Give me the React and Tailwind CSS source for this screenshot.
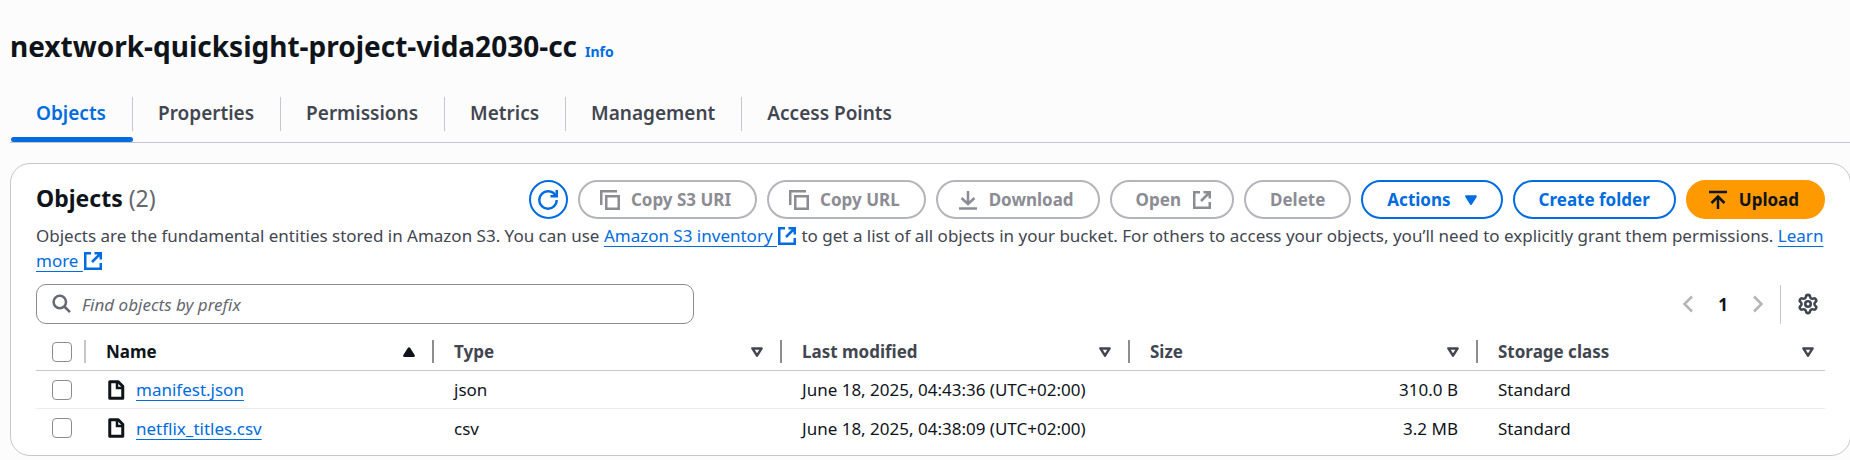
import { Settings } from "lucide-react";

const TABS = ["Objects", "Properties", "Permissions", "Metrics", "Management", "Access Points"];

const COLUMNS = [
  { label: "Name", sorted: true },
  { label: "Type" },
  { label: "Last modified" },
  { label: "Size" },
  { label: "Storage class" },
];

const FILES = [
  { name: "manifest.json", type: "json", modified: "June 18, 2025, 04:43:36 (UTC+02:00)", size: "310.0 B", storage: "Standard" },
  { name: "netflix_titles.csv", type: "csv", modified: "June 18, 2025, 04:38:09 (UTC+02:00)", size: "3.2 MB", storage: "Standard" },
];

function Icon({ children, className = "size-5", strokeWidth = 2.5 }) {
  return (
    <svg viewBox="0 0 20 20" fill="none" stroke="currentColor" strokeWidth={strokeWidth} aria-hidden="true" className={`shrink-0 ${className}`}>
      {children}
    </svg>
  );
}

function RefreshIcon() {
  return (
    <Icon>
      <path d="M12.5 6.25h6.25V0" />
      <path d="M18.75 10A8.7 8.7 0 0 1 10 18.75 8.7 8.7 0 0 1 1.25 10 8.7 8.7 0 0 1 10 1.25a8.6 8.6 0 0 1 7.9 5" />
    </Icon>
  );
}

function CopyIcon() {
  return (
    <Icon>
      <path d="M1.25 15V1.25H17" />
      <path d="M6.25 6.25h12.5v12.5H6.25z" />
    </Icon>
  );
}

function DownloadIcon() {
  return (
    <Icon>
      <path d="M10 1v12.5M3.5 8l6.5 6 6.5-6M1 18.5h18" />
    </Icon>
  );
}

function UploadIcon() {
  return (
    <Icon>
      <path d="M10 19V7M3.5 13l6.5-6.5 6.5 6.5M1 2h18" />
    </Icon>
  );
}

function ExternalIcon({ className }) {
  return (
    <Icon className={className}>
      <path d="M11.5 2.25h6.25V8.5M9 11l8.5-8.5" />
      <path d="M17.75 12v5.75H2.25V2.25H8" />
    </Icon>
  );
}

function FileIcon() {
  return (
    <Icon strokeWidth={3}>
      <path strokeLinejoin="round" d="M3.75 1.75h8.5l4.5 4.5v12h-13z" />
      <path strokeWidth="2.5" d="M11 2v6h5.5" />
    </Icon>
  );
}

function Triangle({ up, filled }) {
  return (
    <svg viewBox="0 0 12 10" aria-hidden="true" className="h-[10px] w-3 shrink-0" fill={filled ? "currentColor" : "none"} stroke="currentColor" strokeWidth="2.5" strokeLinejoin="round">
      <path d={up ? "M6 1.5l4.6 7.200H1.400z" : "M6 8.600L1.400 1.400h9.200z"} />
    </svg>
  );
}

function Button({ children, variant = "normal", disabled }) {
  const look = {
    normal: "border-[#006ce0] text-[#006ce0] bg-white",
    disabled: "border-[#b4b4bb] text-[#8c8c94] bg-white",
    primary: "border-[#ff9900] text-[#0f141a] bg-[#ff9900]",
  }[disabled ? "disabled" : variant];
  return (
    <button
      type="button"
      disabled={disabled}
      className={`flex h-[39px] shrink-0 items-center rounded-full border-2 text-[17px] font-bold whitespace-nowrap ${look}`}
    >
      {children}
    </button>
  );
}

function Checkbox({ label }) {
  return (
    <input type="checkbox" aria-label={label} className="block size-5 appearance-none rounded-[4px] border border-[#8c8c94] bg-white checked:bg-[#006ce0]" />
  );
}

const LINK = "text-[#006ce0] underline decoration-1 underline-offset-4";

export default function App() {
  return (
    <main className="min-h-screen overflow-hidden bg-[#fcfcfd] pt-[26px] pb-1 pl-[10px] font-['Noto_Sans',sans-serif] text-[17px] leading-[25px] text-[#0f141a]">
      <header className="flex items-baseline gap-2">
        <h1 className="text-[28px] leading-[40px] font-bold">nextwork-quicksight-project-vida2030-cc</h1>
        <a href="#info" className="text-[14px] font-bold text-[#006ce0]">Info</a>
      </header>

      <nav className="mt-[21px] flex h-[56px] items-start border-b border-[#c6c6cd] pl-px">
        {TABS.map((tab, i) => (
          <a
            key={tab}
            href={`#${tab.toLowerCase().replace(" ", "-")}`}
            className={`flex h-[55px] flex-col text-[19px] font-semibold ${i === 0 ? "text-[#006ce0]" : "text-[#424650]"}`}
          >
            <span className={`mt-[10px] flex h-[34px] items-center pr-[26px] pb-[2px] pl-[25px] ${i < TABS.length - 1 ? "border-r border-[#c6c6cd]" : ""}`}>
              {tab}
            </span>
            {i === 0 && <span className="mt-auto h-[5px] rounded-[3px] bg-[#006ce0]" />}
          </a>
        ))}
      </nav>

      <section className="-mr-px mt-5 rounded-[20px] border border-[#c6c6cd] bg-white px-[25px] pt-4 pb-2">
        <div className="flex items-start justify-between">
          <h2 className="text-[23px] leading-[36px] font-bold">
            Objects <span className="font-normal text-[#656871]">(2)</span>
          </h2>
          <div className="flex gap-[10px]">
            <button type="button" aria-label="Refresh" className="flex size-[39px] items-center justify-center rounded-full border-2 border-[#006ce0] text-[#006ce0]">
              <RefreshIcon />
            </button>
            <Button disabled>
              <span className="flex items-center gap-[11px] pr-6 pl-5"><CopyIcon />Copy S3 URI</span>
            </Button>
            <Button disabled>
              <span className="flex items-center gap-[11px] pr-6 pl-5"><CopyIcon />Copy URL</span>
            </Button>
            <Button disabled>
              <span className="flex items-center gap-[11px] pr-6 pl-5"><DownloadIcon />Download</span>
            </Button>
            <Button disabled>
              <span className="flex items-center gap-[11px] pr-5 pl-6">Open<ExternalIcon /></span>
            </Button>
            <Button disabled>
              <span className="px-6">Delete</span>
            </Button>
            <Button>
              <span className="flex items-center gap-[14px] px-6">Actions<Triangle filled /></span>
            </Button>
            <Button>
              <span className="px-6">Create folder</span>
            </Button>
            <Button variant="primary">
              <span className="flex items-center gap-[11px] pr-6 pl-5"><UploadIcon />Upload</span>
            </Button>
          </div>
        </div>

        <p className="mt-1 text-[#424650]">
          Objects are the fundamental entities stored in Amazon S3. You can use{" "}
          <a href="#inventory" className={LINK}>
            Amazon S3 inventory&nbsp;
            <ExternalIcon className="inline-block size-5 align-[-4px]" />
          </a>{" "}
          to get a list of all objects in your bucket. For others to access your objects, you’ll need to explicitly grant them permissions.{" "}
          <a href="#learn-more" className={LINK}>
            Learn more&nbsp;
            <ExternalIcon className="inline-block size-5 align-[-4px]" />
          </a>
        </p>

        <div className="mt-[11px] flex items-center justify-between">
          <label className="flex h-10 w-[658px] items-center gap-[10px] rounded-[10px] border border-[#8c8c94] bg-white pl-[15px] text-[#656871]">
            <Icon>
              <circle cx="7.8" cy="8" r="6.200" />
              <path d="M12.300 12.500l5.700 5.700" />
            </Icon>
            <input type="text" aria-label="Find objects by prefix" placeholder="Find objects by prefix" className="min-w-0 flex-1 bg-transparent outline-none placeholder:text-[#656871] placeholder:italic" />
          </label>
          <div className="flex items-center">
            <button type="button" aria-label="Previous page" disabled className="text-[#b4b4bb]">
              <Icon><path d="M14 2.500L6.500 10l7.500 7.500" /></Icon>
            </button>
            <button type="button" aria-label="Page 1" className="px-5 font-bold">1</button>
            <button type="button" aria-label="Next page" disabled className="text-[#b4b4bb]">
              <Icon><path d="M6 2.500L13.500 10 6 17.500" /></Icon>
            </button>
            <div className="ml-3 h-[39px] w-px bg-[#c6c6cd]" />
            <button type="button" aria-label="Preferences" className="pr-[6px] pl-4 text-[#424650]">
              <Settings size={22} strokeWidth={2.8} />
            </button>
          </div>
        </div>

        <table className="mt-[9px] w-full table-fixed border-separate border-spacing-0">
          <colgroup>
            <col className="w-[50px]" />
            <col className="w-[348px]" />
            <col className="w-[348px]" />
            <col className="w-[348px]" />
            <col className="w-[348px]" />
            <col />
          </colgroup>
          <thead>
            <tr>
              <th className="border-b border-[#c6c6cd] p-0">
                <div className="flex h-[37px] items-center justify-between pl-4">
                  <Checkbox label="Select all objects" />
                  <span className="h-[23px] w-[2px] bg-[#c6c6cd]" />
                </div>
              </th>
              {COLUMNS.map((col, i) => (
                <th key={col.label} className={`border-b border-[#c6c6cd] p-0 ${col.sorted ? "text-[#0f141a]" : "text-[#424650]"}`}>
                  <div className="flex h-[37px] items-center">
                    <button type="button" className={`flex flex-1 items-center justify-between pl-5 font-bold ${i < 4 ? "pr-[17px]" : "pr-[11px]"}`}>
                      {col.label}
                      <Triangle up={col.sorted} filled={col.sorted} />
                    </button>
                    {i < 4 && <span className="h-[23px] w-[2px] bg-[#8c8c94]" />}
                  </div>
                </th>
              ))}
            </tr>
          </thead>
          <tbody className="[&>tr:not(:last-child)>td]:border-b [&>tr:not(:last-child)>td]:border-[#ebebf0]">
            {FILES.map((file) => (
              <tr key={file.name} className="h-[38px]">
                <td className="p-0 pl-4"><Checkbox label={`Select ${file.name}`} /></td>
                <td className="p-0 pl-5">
                  <span className="flex items-center gap-[10px]">
                    <FileIcon />
                    <a href={`#${file.name}`} className={LINK}>{file.name}</a>
                  </span>
                </td>
                <td className="p-0 pl-5">{file.type}</td>
                <td className="p-0 pl-5">{file.modified}</td>
                <td className="p-0 pr-5 text-right">{file.size}</td>
                <td className="p-0 pl-5">{file.storage}</td>
              </tr>
            ))}
          </tbody>
        </table>
      </section>
    </main>
  );
}
